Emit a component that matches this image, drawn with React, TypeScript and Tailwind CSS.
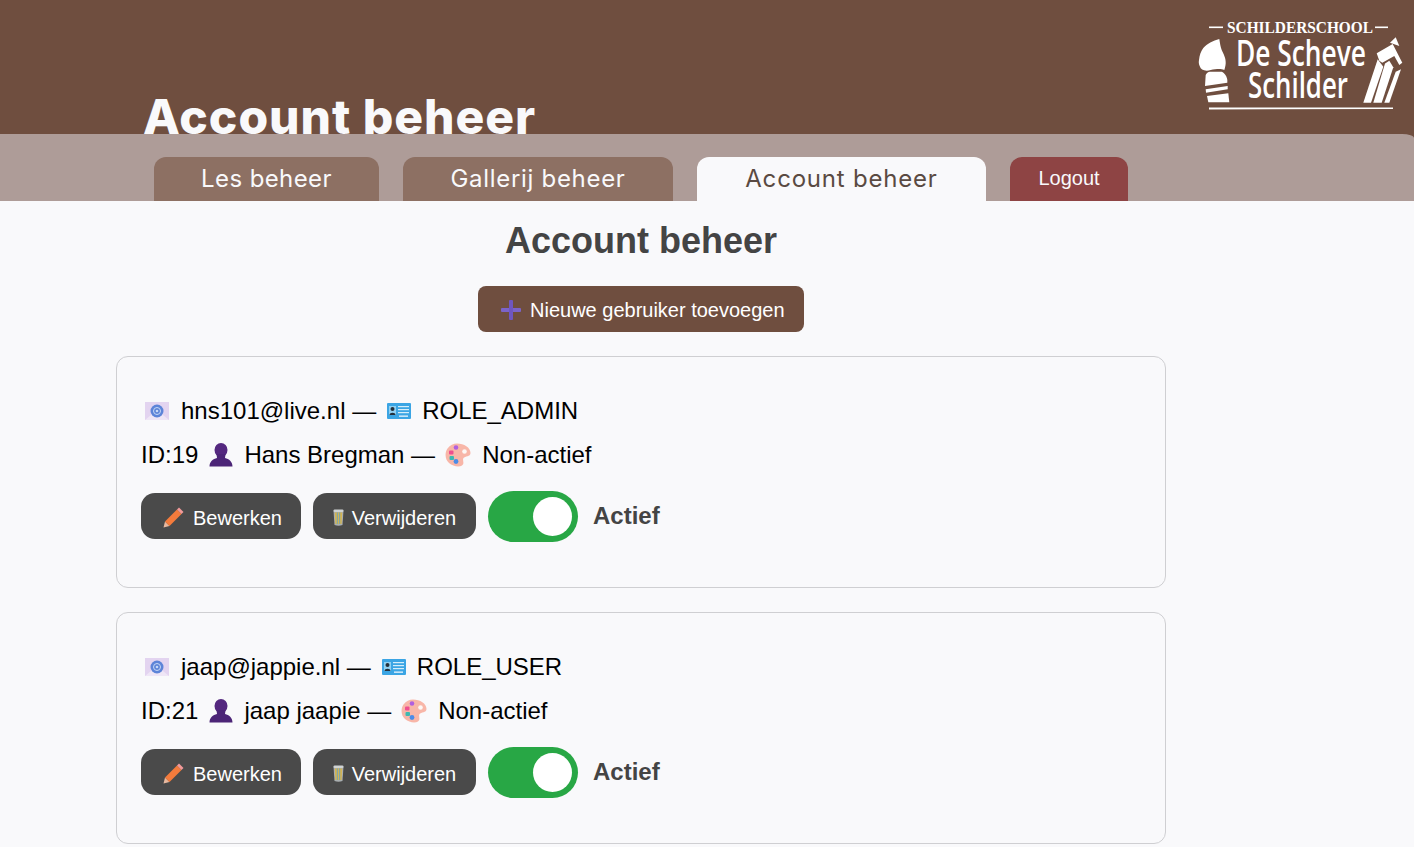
const sans = "font-['Liberation_Sans',Arial,sans-serif]";
const display = "font-['Inter','Noto_Sans',sans-serif]";

const accounts = [
  { id: 19, email: 'hns101@live.nl', role: 'ROLE_ADMIN', name: 'Hans Bregman' },
  { id: 21, email: 'jaap@jappie.nl', role: 'ROLE_USER', name: 'jaap jaapie' },
];

function Logo() {
  return (
    <svg width="220" height="105" viewBox="1190 10 220 105" fill="#fff" className="shrink-0">
      <rect x="1209" y="26.5" width="14" height="1.6" />
      <rect x="1375" y="26.5" width="13" height="1.6" />
      <text x="1227" y="32.5" fontFamily="Liberation Serif" fontWeight="700" fontSize="16" textLength="146" lengthAdjust="spacingAndGlyphs">SCHILDERSCHOOL</text>
      <text x="1236" y="66" fontFamily="Open Sans" fontWeight="600" fontSize="36" textLength="130" lengthAdjust="spacingAndGlyphs">De Scheve</text>
      <text x="1248" y="98" fontFamily="Open Sans" fontWeight="600" fontSize="36" textLength="100" lengthAdjust="spacingAndGlyphs">Schilder</text>
      <path d="M1209 107.5 L1393 107.5 L1393 109 L1209 109.5 Z" />
      {/* brush */}
      <path d="M1219.3 39 C1220 43 1220.5 47 1221.7 50 C1223.5 54 1226 58 1225.7 63.3 C1225.5 66 1225 68 1224.3 70 C1221 68.5 1218 69 1215 69.3 C1212 69.6 1209.5 70.5 1206.7 70.7 C1203 70.5 1200.5 69 1200 66.7 C1198.5 64 1198.7 62 1199 60 C1199.5 55 1201 51 1203.3 48 C1207 43.5 1213 41 1219.3 39 Z" />
      <path d="M1205.7 75 C1206.5 73 1208 71.7 1210 71.7 L1221.7 71.7 C1224.5 73 1227 76.5 1227.3 80 L1227.3 82.7 L1205 86 Z" />
      <path d="M1205.7 89.3 L1227.7 86 L1227.7 89.3 L1206 92.7 Z" />
      <path d="M1207 96 L1228.3 93.3 L1229.3 102.3 L1208.3 102.3 Z" />
      {/* pencil */}
      <path d="M1390 42.7 L1395.7 37.3 L1399.3 46 Z" />
      <path d="M1376.7 53.3 L1392.7 44 L1402.3 62.7 L1399.3 65 L1394.3 56 L1382.3 62.7 L1379.3 60.7 Z" />
      <path d="M1363.3 102.7 L1371 102.7 L1383.3 66.7 L1377.7 59.3 Z" />
      <path d="M1373.3 102.7 L1381.7 102.7 L1393.3 67.3 L1389.3 60.7 L1385 63.5 Z" />
      <path d="M1384.3 102.7 L1389.3 102.7 L1401 69.3 L1395.7 71.7 Z" />
    </svg>
  );
}

function PlusIcon() {
  return (
    <svg width="20" height="20" viewBox="0 0 20 20" className="shrink-0">
      <rect x="0" y="8" width="20" height="4" rx="1" fill="#7b63c9" />
      <rect x="8" y="0" width="4" height="20" rx="1" fill="#6f56c0" />
    </svg>
  );
}

function MailIcon() {
  return (
    <svg width="24" height="18" viewBox="0 0 24 18" className="shrink-0">
      <rect width="24" height="18" fill="#e3d4f0" />
      <path d="M0 18 L12 8 L24 18 Z" fill="#efe6f6" />
      <circle cx="12" cy="9" r="6.5" fill="#5d84d8" />
      <circle cx="12" cy="9" r="3.5" fill="none" stroke="#c7d8f6" strokeWidth="1" />
      <circle cx="12" cy="9" r="1.3" fill="#c7d8f6" />
    </svg>
  );
}

function CardIcon() {
  return (
    <svg width="24" height="16" viewBox="0 0 24 16" className="shrink-0">
      <rect width="24" height="16" rx="1" fill="#3ba5e4" />
      <rect x="2" y="3" width="7" height="9" fill="#8fd0f2" />
      <circle cx="5.5" cy="6" r="2" fill="#23303c" />
      <path d="M2.5 12 C2.5 9 8.5 9 8.5 12 Z" fill="#23303c" />
      <rect x="11" y="3" width="11" height="1.2" fill="#d5eefb" />
      <rect x="11" y="6" width="11" height="1.2" fill="#d5eefb" />
      <rect x="11" y="9" width="11" height="1.2" fill="#d5eefb" />
      <rect x="12" y="12.5" width="9" height="1.3" fill="#e9f6fd" />
    </svg>
  );
}

function PersonIcon() {
  return (
    <svg width="24" height="24" viewBox="0 0 24 24" className="shrink-0">
      <ellipse cx="12" cy="7" rx="6.5" ry="7" fill="#54287f" />
      <path d="M7.5 11 L16.5 11 L16 15 C20 16 23.5 18.5 23.5 23.5 L0.5 23.5 C0.5 18.5 4 16 8 15 Z" fill="#4c2577" />
    </svg>
  );
}

function PaletteIcon() {
  return (
    <svg width="26" height="24" viewBox="0 0 26 24" className="shrink-0">
      <path d="M12 0.5 C19 0.5 25.5 4.5 25.5 10 C25.5 14 20 13 18.5 15 C17 17.5 20 20 17 22.5 C14 24.5 8 23.5 4 20 C0 16.5 -0.5 10 2.5 5.5 C5 2 8.5 0.5 12 0.5 Z" fill="#f8b6a8" />
      <circle cx="19.5" cy="8.5" r="2.3" fill="#fdf7f4" />
      <circle cx="11" cy="4.5" r="2.3" fill="#b05fe0" />
      <rect x="4" y="7.5" width="4.5" height="4" rx="1" fill="#ef4f8f" />
      <rect x="4.5" y="13" width="4.5" height="4" rx="1" fill="#3fb8b0" />
      <circle cx="11" cy="18.5" r="2.4" fill="#4c8ce8" />
    </svg>
  );
}

function PencilIcon() {
  return (
    <svg width="21" height="21" viewBox="0 0 21 21" className="shrink-0">
      <path d="M0.5 20.5 L2 14.5 L6.5 19 Z" fill="#e8b9a0" />
      <path d="M2 14.5 L14 2.5 L18.5 7 L6.5 19 Z" fill="#f47b3c" />
      <path d="M14 2.5 L16 0.5 L20.5 5 L18.5 7 Z" fill="#f29a9a" />
    </svg>
  );
}

function TrashIcon() {
  return (
    <svg width="11" height="17" viewBox="0 0 11 17" className="shrink-0">
      <path d="M0.5 1.5 L10.5 1.5 L9.5 16 Q5.5 17.5 1.5 16 Z" fill="#a9aeb0" />
      <path d="M1.8 3.5 L9.2 3.5 L8.6 15 L2.4 15 Z" fill="#d5b453" />
      <rect x="3.8" y="3.5" width="1" height="11.5" fill="#6fa3b8" />
      <rect x="6.2" y="3.5" width="1" height="11.5" fill="#6fa3b8" />
      <rect x="0.5" y="0.5" width="10" height="2.5" rx="1.2" fill="#cfd3d4" />
    </svg>
  );
}

function AccountCard({ account }: { account: (typeof accounts)[number] }) {
  return (
    <div className="h-[232px] rounded-xl border border-[#cfcfd2] px-6 pt-[32px]">
      <div className="flex h-[44px] items-center text-2xl text-black">
        <span className="ml-[4px] mr-[12px]"><MailIcon /></span>
        <span>{account.email} —</span>
        <span className="ml-[11px] mr-[11px]"><CardIcon /></span>
        <span>{account.role}</span>
      </div>
      <div className="flex h-[44px] items-center text-2xl text-black">
        <span>ID:{account.id}</span>
        <span className="ml-[11px] mr-[11px]"><PersonIcon /></span>
        <span>{account.name} —</span>
        <span className="ml-[10px] mr-[11px]"><PaletteIcon /></span>
        <span>Non-actief</span>
      </div>
      <div className="mt-[14px] flex items-center">
        <div className="flex h-[51px] items-start pt-[2px]">
          <button className="flex h-[46px] w-[160px] items-center gap-[9px] rounded-[14px] bg-[#4a4a4a] pl-[22px] pt-[3px] text-xl text-white">
            <PencilIcon />
            Bewerken
          </button>
          <button className="ml-3 flex h-[46px] w-[163px] items-center justify-center gap-[8px] rounded-[14px] bg-[#4a4a4a] pt-[3px] text-xl text-white">
            <TrashIcon />
            Verwijderen
          </button>
        </div>
        <div className="ml-3 flex h-[51px] w-[90px] items-center justify-end rounded-full bg-[#28a745] pr-[6px]">
          <div className="h-[39px] w-[39px] rounded-full bg-white" />
        </div>
        <span className="ml-[15px] -translate-y-px text-2xl font-bold text-[#444]">Actief</span>
      </div>
    </div>
  );
}

export default function App() {
  return (
    <div className={`h-[847px] overflow-hidden bg-[#f9f9fb] ${sans}`}>
      <header className="flex h-[134px] items-start justify-between overflow-hidden bg-[#6f4e3f] pr-[4px] pt-[10px]">
        <h1 className={`ml-[143px] mt-[75px] whitespace-nowrap text-[48px] font-extrabold leading-[64px] tracking-[0.95px] text-[#f9f9fb] ${display}`}>Account beheer</h1>
        <Logo />
      </header>

      <div className="bg-[#6f4e3f]">
        <nav className="flex h-[67px] items-end gap-6 rounded-tr-[12px_4px] bg-[#ae9c98] pl-[154px]">
          <a className={`flex h-11 w-[225px] items-center justify-center rounded-t-xl bg-[#8d7063] text-2xl tracking-[0.4px] text-[#f9f9fb] ${display}`}>Les beheer</a>
          <a className={`flex h-11 w-[270px] items-center justify-center rounded-t-xl bg-[#8d7063] text-2xl tracking-[0.7px] text-[#f9f9fb] ${display}`}>Gallerij beheer</a>
          <a className={`flex h-11 w-[289px] items-center justify-center rounded-t-xl bg-[#f9f9fb] text-2xl tracking-[0.8px] text-[#5a4a42] ${display}`}>Account beheer</a>
          <a className="flex h-11 w-[118px] items-center justify-center rounded-t-xl bg-[#8e4444] pb-[2px] text-xl text-[#f9f9fb]">Logout</a>
        </nav>
      </div>

      <main className="ml-[116px] w-[1050px]">
        <h2 className="mt-[18px] text-center text-4xl font-bold leading-[44px] text-[#444]">Account beheer</h2>
        <div className="mt-[23px] flex justify-center">
          <button className="flex h-[46px] w-[326px] items-center gap-[9px] rounded-lg bg-[#6f4e3f] pl-[23px] pt-[2px] text-xl text-white">
            <PlusIcon />
            Nieuwe gebruiker toevoegen
          </button>
        </div>
        <div className="mt-6 flex flex-col gap-6">
          {accounts.map((account) => (
            <AccountCard key={account.id} account={account} />
          ))}
        </div>
      </main>
    </div>
  );
}
